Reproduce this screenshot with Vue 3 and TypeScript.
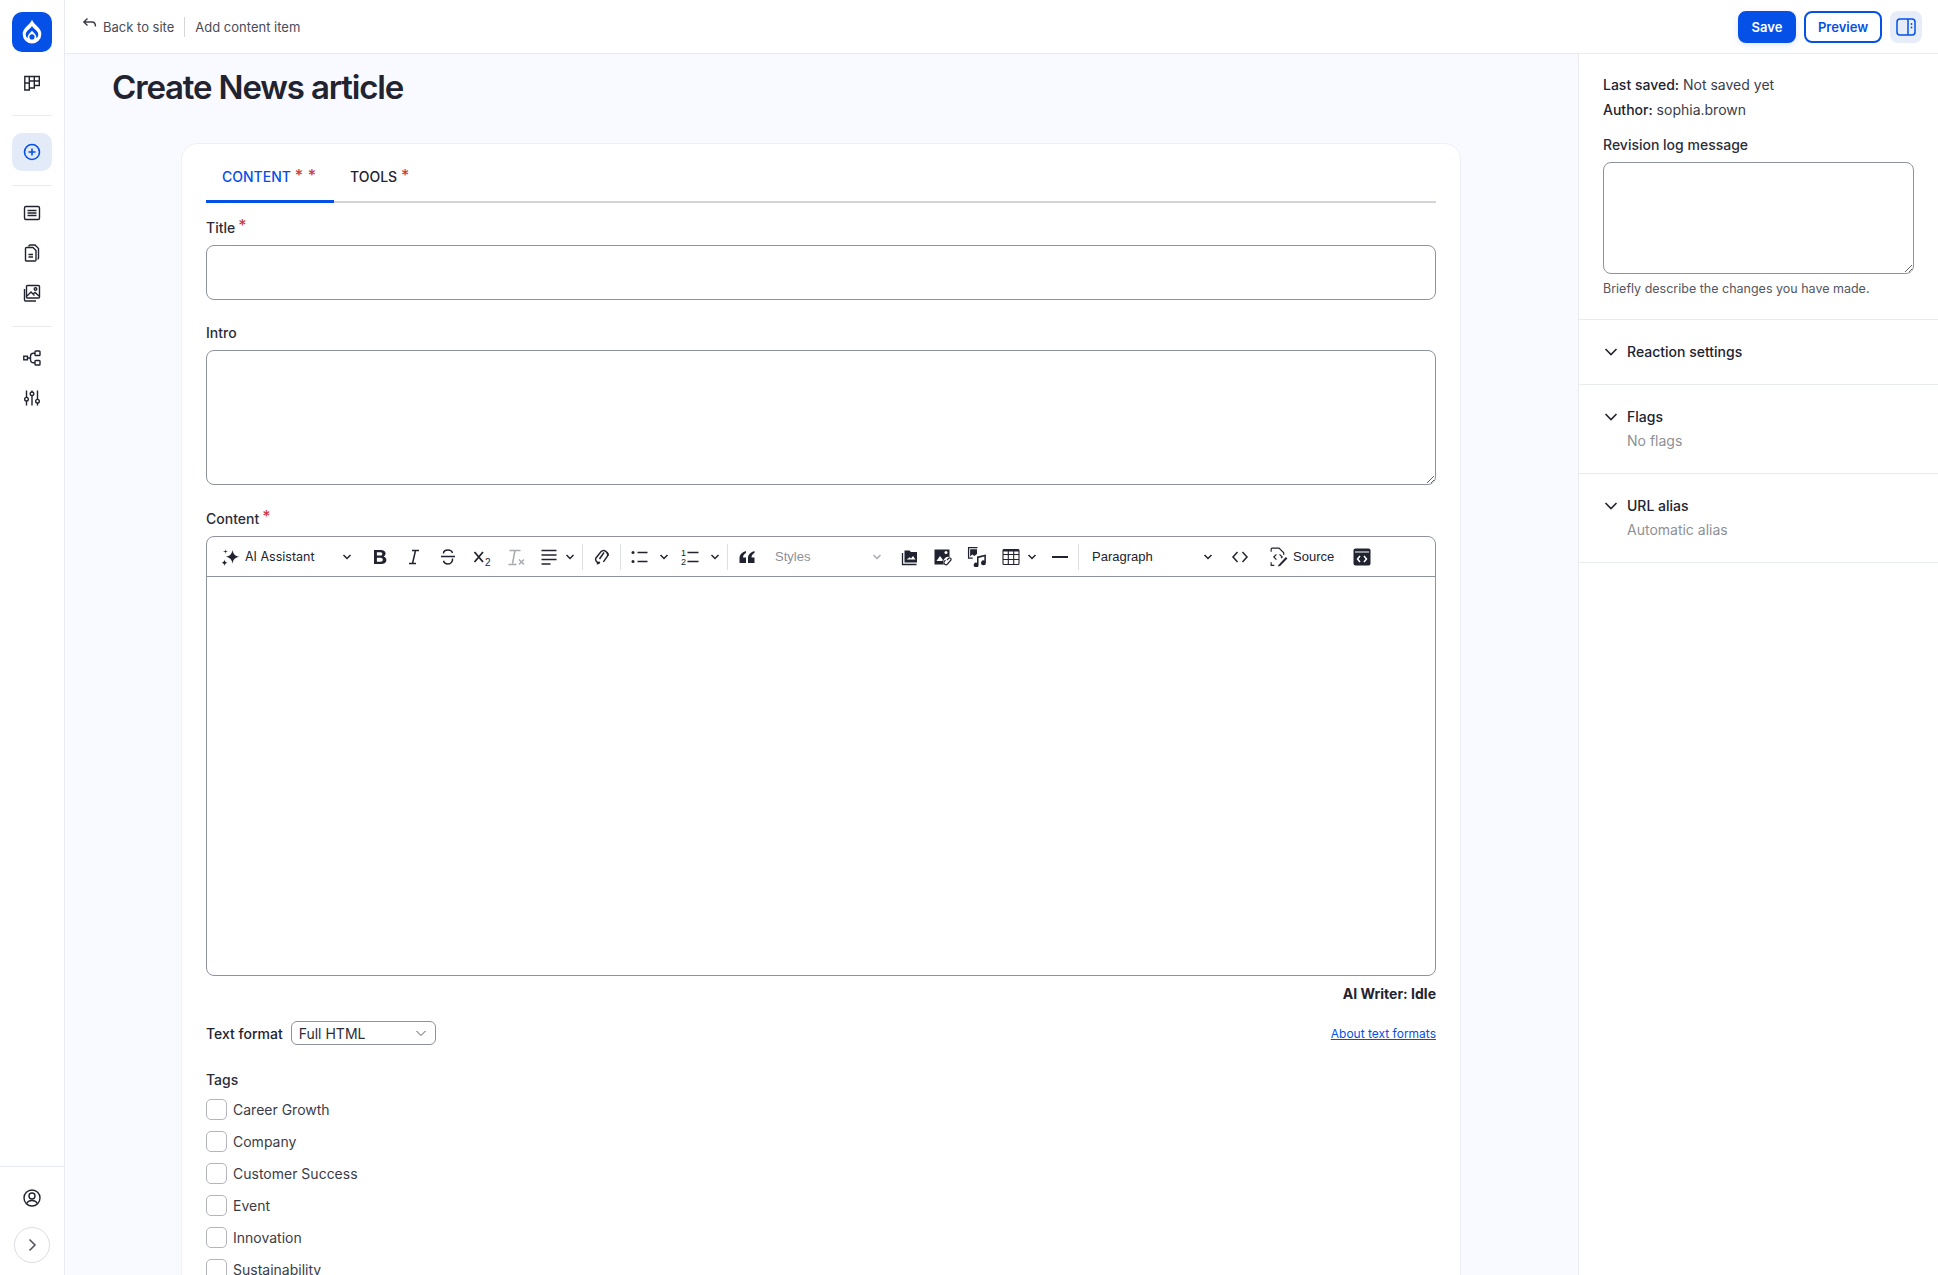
<script setup lang="ts">
const tags: string[] = ['Career Growth', 'Company', 'Customer Success', 'Event', 'Innovation', 'Sustainability']
</script>

<template>
  <div class="app">
    <aside class="nav">
      <div class="logo">
        <svg width="28" height="28" viewBox="0 0 24 24"><path fill="#fff" fill-rule="evenodd" d="M12 1.600c1 2.600 3 4 4.700 5.700 1.900 1.900 3.300 3.900 3.300 6.500a8 8 0 0 1-16 0c0-2.600 1.400-4.600 3.300-6.500C9 5.600 11 4.200 12 1.600zm0 5.200c-.8 1.400-2 2.300-3 3.300-1.200 1.200-2.400 2.400-2.400 4a3.600 3.600 0 0 0 1.700 3.100c-.2-1.700.6-3.100 1.700-4.200l2-2 2 2c1.100 1.100 1.900 2.500 1.700 4.200a3.600 3.600 0 0 0 1.700-3.100c0-1.600-1.200-2.800-2.400-4-1-1-2.200-1.900-3-3.300zM12 14a2.200 2.200 0 1 0 0 4.400 2.200 2.200 0 0 0 0-4.400z"/></svg>
      </div>
      <div class="nav-item first">
        <svg class="ni" viewBox="0 0 20 20"><path d="M2.800 3.500h4.500v13.500H2.800zM7.300 3.500h5v11.500h-5zM12.300 3.500h5v9h-5zM2.800 10H7.300M7.300 8h5M12.300 8h5"/></svg>
      </div>
      <hr class="nav-sep s1" />
      <div class="nav-item active">
        <svg class="ni blue" viewBox="0 0 20 20"><circle cx="10" cy="10" r="7.500"/><path d="M10 6.500v7M6.500 10h7"/></svg>
      </div>
      <hr class="nav-sep s2" />
      <div class="nav-item">
        <svg class="ni" viewBox="0 0 20 20"><rect x="2.500" y="3.500" width="15" height="13" rx="1.500"/><path d="M5.500 7.500h9M5.500 10h9M5.500 12.500h9"/></svg>
      </div>
      <div class="nav-item">
        <svg class="ni" viewBox="0 0 20 20"><path d="M7 3.500V3a1 1 0 0 1 1-1h5l3.500 3.500V15a1 1 0 0 1-1 1"/><path d="M4.500 4.500h6.500l3 3V17a1 1 0 0 1-1 1H4.500a1 1 0 0 1-1-1V5.500a1 1 0 0 1 1-1zM6.500 11.500h4.500M6.500 14h4.500"/></svg>
      </div>
      <div class="nav-item">
        <svg class="ni" viewBox="0 0 20 20"><rect x="4.500" y="2.500" width="13" height="12.500" rx="1"/><path d="M2.500 6v11a1 1 0 0 0 1 1H14M5 13l4-4 3.500 3.500M11 11l2-1.500 4 3.500"/><circle cx="13.500" cy="6" r="1.300"/></svg>
      </div>
      <hr class="nav-sep s3" />
      <div class="nav-item">
        <svg class="ni" viewBox="0 0 20 20"><rect x="1.800" y="8.200" width="3.600" height="3.600"/><rect x="13" y="3" width="5" height="4.500" rx=".8"/><rect x="13" y="12.500" width="5" height="4.500" rx=".8"/><path d="M5.400 10h3.100M13 5.200h-1.500a3 3 0 0 0-3 3v3.600a3 3 0 0 0 3 3H13"/></svg>
      </div>
      <div class="nav-item">
        <svg class="ni" viewBox="0 0 20 20"><path d="M4.500 2.500v7M4.500 13v4.500M10 2.500v1.500M10 7.600v9.900M15.500 2.500v9M15.500 15v2.500"/><circle cx="4.500" cy="11.200" r="1.800"/><circle cx="10" cy="5.800" r="1.800"/><circle cx="15.500" cy="13.200" r="1.800"/></svg>
      </div>
      <div class="nav-bottom">
        <div class="nav-user">
          <svg class="ni" viewBox="0 0 20 20"><circle cx="10" cy="10" r="8"/><circle cx="10" cy="8" r="3"/><path d="M4.700 15.700c.7-2 2.800-3.200 5.300-3.200s4.600 1.200 5.300 3.200"/></svg>
        </div>
        <div class="expand">
          <svg width="16" height="16" viewBox="0 0 16 16" fill="none" stroke="#55565f" stroke-width="1.600"><path d="M5.500 2.500 11 8l-5.500 5.500"/></svg>
        </div>
      </div>
    </aside>

    <div class="main">
      <header class="topbar">
        <a class="back">
          <svg width="16" height="16" viewBox="0 0 16 16" fill="none" stroke="#3b3c47" stroke-width="1.400"><path d="M5.500 1.500 1.800 5l3.700 3.500M2 5h8c2.500 0 3.500 1.600 3.500 4.500"/></svg>
          <span>Back to site</span>
        </a>
        <span class="crumb">Add content item</span>
        <div class="actions">
          <button class="btn primary">Save</button>
          <button class="btn outline">Preview</button>
          <button class="btn toggle">
            <svg width="20" height="20" viewBox="0 0 20 20" fill="none" stroke="#0550e6" stroke-width="1.500"><rect x="1" y="2" width="18" height="16" rx="3"/><path d="M12 2v16"/><circle cx="15.500" cy="7" r=".9" fill="#0550e6" stroke="none"/><circle cx="15.500" cy="10.500" r=".9" fill="#0550e6" stroke="none"/></svg>
          </button>
        </div>
      </header>

      <div class="workspace">
        <main class="content">
          <h1>Create News article</h1>
          <section class="card">
            <div class="tabs">
              <div class="tab on">CONTENT <i>*</i> <i class="second">*</i></div>
              <div class="tab">TOOLS <i>*</i></div>
            </div>

            <label class="lbl l-title">Title<i>*</i></label>
            <input class="box input-title" type="text" />

            <label class="lbl l-next">Intro</label>
            <textarea class="box input-intro"></textarea>

            <label class="lbl l-content">Content<i>*</i></label>
            <div class="editor">
              <div class="toolbar">
                <div class="tdrop ai">
                  <svg width="20" height="20" viewBox="0 0 20 20" fill="#222330"><path d="M12.500 3c.8 4.300 2.500 6 7 6.800-4.500.8-6.200 2.500-7 6.900-.8-4.400-2.500-6.100-7-6.900 4.500-.8 6.200-2.500 7-6.800zM4.500 12.500c.4 2.200 1.100 2.900 3.300 3.300-2.200.4-2.900 1.100-3.300 3.200-.4-2.100-1.100-2.800-3.200-3.200 2.100-.4 2.800-1.100 3.200-3.300zM5.500 2l.4 2.100L8 4.500l-2.100.4L5.500 7l-.4-2.100L3 4.500l2.100-.4z"/></svg>
                  <span class="drop-text">AI Assistant</span>
                  <svg class="chev" viewBox="0 0 10 10"><path d="m1.500 3 3.500 3.500L8.500 3"/></svg>
                </div>
                <div class="tb">
                  <svg class="ti" viewBox="0 0 20 20" fill="#222330"><path d="M4 3h6.800c3 0 4.800 1.300 4.800 3.600 0 1.400-.8 2.500-2.100 2.900 1.700.4 2.900 1.600 2.900 3.400 0 2.600-2 4.100-5.200 4.100H4zm2.900 2.300v3.300h3.300c1.300 0 2.100-.6 2.100-1.700s-.8-1.600-2.100-1.600zm0 5.500v3.900h3.600c1.500 0 2.300-.7 2.300-1.900 0-1.300-.8-2-2.300-2z"/></svg>
                </div>
                <div class="tb">
                  <svg class="ti line" viewBox="0 0 20 20"><path d="M8 3.500h7M5 16.500h7M11.500 3.500l-3 13"/></svg>
                </div>
                <div class="tb">
                  <svg class="ti line" viewBox="0 0 20 20"><path d="M3 9.500h14M14.500 6c-.5-2-2.300-3-4.500-3-2.500 0-4.500 1.300-4.500 3.400M14.500 11.500c.5 3-1.700 5.500-4.500 5.500-2.400 0-4-1.200-4.500-3.200"/></svg>
                </div>
                <div class="tb">
                  <svg class="ti" viewBox="0 0 20 20"><path fill="none" stroke="#222330" stroke-width="1.800" d="m2.500 5 8.500 10M11 5l-8.500 10"/><text x="13" y="18.500" class="sub">2</text></svg>
                </div>
                <div class="tb">
                  <svg class="ti line muted" viewBox="0 0 20 20"><path d="M3.500 3.500h11M9 3.500l-2.500 13M2.500 17.500h8M13 12.500l5 5M18 12.500l-5 5"/></svg>
                </div>
                <div class="tb split align">
                  <svg class="ti line" viewBox="0 0 20 20"><path d="M2.500 3.500h15M2.500 8h15M2.500 12.500h15M2.500 17h9"/></svg>
                  <svg class="chev" viewBox="0 0 10 10"><path d="m1.500 3 3.500 3.500L8.500 3"/></svg>
                </div>
                <span class="tsep"></span>
                <div class="tb link">
                  <svg class="ti line" viewBox="0 0 20 20"><path d="M7.800 15.300a3.100 3.100 0 0 1-4-4.100l5-6.300a4 4 0 0 1 6.300 4.800l-3.700 5.200M12 5.500 7.500 12"/><path d="M15.200 5.500a4 4 0 0 1 .9 3.300M7.800 15.300c-1 1.300-1.500 1.600-3 1.500"/></svg>
                </div>
                <span class="tsep"></span>
                <div class="tb bullets">
                  <svg class="ti line" viewBox="0 0 20 20"><circle cx="3" cy="5.500" r="1.500" fill="#222330" stroke="none"/><circle cx="3" cy="14.500" r="1.500" fill="#222330" stroke="none"/><path d="M7.500 5.500h10M7.500 14.500h10"/></svg>
                  <svg class="chev" viewBox="0 0 10 10"><path d="m1.500 3 3.500 3.500L8.500 3"/></svg>
                </div>
                <div class="tb numbers">
                  <svg class="ti line" viewBox="0 0 20 20"><path d="M7.500 5.500h11M7.500 14.500h11"/><text x="1" y="9" class="num">1</text><text x="1" y="18" class="num">2</text></svg>
                  <svg class="chev" viewBox="0 0 10 10"><path d="m1.500 3 3.500 3.500L8.500 3"/></svg>
                </div>
                <span class="tsep"></span>
                <div class="tb q">
                  <svg class="ti" viewBox="0 0 20 20" fill="#222330"><path d="M9 4C5.500 5 2.500 7.300 2.500 11v5H9v-5.500H6c0-2 1.300-3.800 3-4.500zM17.500 4c-3.500 1-6.500 3.300-6.500 7v5h6.500v-5.500h-3c0-2 1.300-3.800 3-4.500z"/></svg>
                </div>
                <div class="tdrop styles">
                  <span class="drop-text">Styles</span>
                  <svg class="chev" viewBox="0 0 10 10"><path d="m1.500 3 3.500 3.500L8.500 3"/></svg>
                </div>
                <div class="tb">
                  <svg class="ti" viewBox="0 0 20 20" fill="#222330"><path d="M4.500 3.500h5l1.500 1.500h6v10.500h-12.500zM6.500 12.500h9l-2.500-3.500-2 2.500-1.300-1.300z" fill-rule="evenodd"/><path d="M2.500 6v11.500h14" fill="none" stroke="#222330" stroke-width="1.300"/></svg>
                </div>
                <div class="tb imglink">
                  <svg class="ti" viewBox="0 0 20 20"><path fill="#222330" d="M2.500 2.500h15v7.500a5 5 0 0 0-5.500 7.500H2.500z"/><circle cx="14" cy="5.500" r="1.500" fill="#fff"/><path fill="#fff" d="m4.500 14 3.500-5 3 4-1 1z"/><path fill="none" stroke="#222330" stroke-width="1.200" d="m15 13 1.600-1.600a1.400 1.400 0 0 1 2 2L15.500 17a2 2 0 0 1-3-2.800l1-1"/></svg>
                </div>
                <div class="tb music">
                  <svg class="ti big" viewBox="0 0 20 20"><path fill="none" stroke="#222330" stroke-width="1.200" d="M10 1.500H1.500v10h4"/><path fill="#222330" d="M3 3h6.500v4.500L7 9.500 5 8 3 10zM9.500 10l8.500-2v8a2.300 2.300 0 1 1-1.500-2.100v-3.800l-5.500 1.300v6.600a2.300 2.300 0 1 1-1.500-2.100z"/></svg>
                </div>
                <div class="tb table">
                  <svg class="ti line thin" viewBox="0 0 20 20"><rect x="2" y="2.500" width="16" height="15" rx="1"/><path d="M2 7.500h16M2 12.500h16M7.300 2.500v15M12.700 2.500v15"/><path d="M2 3.500h16" stroke-width="2"/></svg>
                  <svg class="chev" viewBox="0 0 10 10"><path d="m1.500 3 3.500 3.500L8.500 3"/></svg>
                </div>
                <div class="tb">
                  <svg class="ti" viewBox="0 0 20 20"><path d="M2 9h16v2H2z" fill="#222330"/></svg>
                </div>
                <span class="tsep"></span>
                <div class="tdrop para">
                  <span class="drop-text">Paragraph</span>
                  <svg class="chev" viewBox="0 0 10 10"><path d="m1.500 3 3.500 3.500L8.500 3"/></svg>
                </div>
                <div class="tb">
                  <svg class="ti line" viewBox="0 0 20 20"><path d="M7.500 5 3 10l4.500 5M12.500 5l4.500 5-4.500 5"/></svg>
                </div>
                <div class="tb source">
                  <svg class="ti line thin big" viewBox="0 0 20 20"><path d="M6 18.500H3v-3M3 5.500V3a1 1 0 0 1 1-1h6.500L15 6.500v2"/><path d="M8 8 5.500 10.500 8 13M11 8l2.500 2.500-1 1"/><path d="m10 18 7-7.500 1.500 1.500-7 7-2 .5z" fill="#222330" stroke="none"/></svg>
                  <span class="drop-text">Source</span>
                </div>
                <div class="tb">
                  <svg class="ti" viewBox="0 0 20 20"><rect x="1.500" y="1.500" width="17" height="17" rx="2" fill="#222330"/><path d="M3 5h14" stroke="#fff" stroke-width="1.200"/><path d="M8 9 5.500 12 8 15M12 9l2.500 3-2.500 3" fill="none" stroke="#fff" stroke-width="1.500"/></svg>
                </div>
              </div>
              <div class="editable"></div>
            </div>
            <div class="writer">AI Writer: Idle</div>

            <div class="format">
              <label class="format-label">Text format</label>
              <div class="select-wrap">
                <select class="select"><option>Full HTML</option></select>
                <svg class="select-chev" viewBox="0 0 12 12"><path d="m1.500 4 4.500 4.500L10.500 4"/></svg>
              </div>
              <a class="about">About text formats</a>
            </div>

            <div class="lbl l-tags">Tags</div>
            <div class="checks">
              <label v-for="t in tags" :key="t" class="check"><input type="checkbox" /><span>{{ t }}</span></label>
            </div>
          </section>
        </main>

        <aside class="side">
          <div class="meta">
            <p><b>Last saved:</b> Not saved yet</p>
            <p><b>Author:</b> sophia.brown</p>
            <label class="lbl rev-label">Revision log message</label>
            <textarea class="box rev"></textarea>
            <div class="help">Briefly describe the changes you have made.</div>
          </div>
          <div class="acc solo">
            <svg class="acc-chev" viewBox="0 0 14 14"><path d="m1.500 4 5.500 5.500L12.500 4"/></svg>
            <div class="acc-title">Reaction settings</div>
          </div>
          <div class="acc">
            <svg class="acc-chev" viewBox="0 0 14 14"><path d="m1.500 4 5.500 5.500L12.500 4"/></svg>
            <div><div class="acc-title">Flags</div><div class="acc-sub">No flags</div></div>
          </div>
          <div class="acc">
            <svg class="acc-chev" viewBox="0 0 14 14"><path d="m1.500 4 5.500 5.500L12.500 4"/></svg>
            <div><div class="acc-title">URL alias</div><div class="acc-sub">Automatic alias</div></div>
          </div>
        </aside>
      </div>
    </div>
  </div>
</template>

<style>
html, body { margin: 0; height: 100%; overflow: hidden; background: #fff; }
</style>

<style scoped>
* { box-sizing: border-box; }
.app { display: flex; height: 100vh; overflow: hidden; font-family: Inter, "Noto Sans", sans-serif; font-size: 14px; color: #222330; background: #f8faff; }
.nav { width: 65px; flex: none; background: #fff; border-right: 1px solid #e9ebf0; display: flex; flex-direction: column; align-items: center; padding-top: 12px; }
.logo { width: 40px; height: 40px; border-radius: 10px; background: #0550e6; display: flex; align-items: center; justify-content: center; }
.nav-item { width: 40px; height: 38px; display: flex; align-items: center; justify-content: center; border-radius: 10px; margin-top: 2px; }
.nav-item.first { margin-top: 12px; }
.nav-item.active { background: #e3ebf9; margin: 0; }
.ni { width: 20px; height: 20px; fill: none; stroke: #222330; stroke-width: 1.400; }
.ni.blue { stroke: #0550e6; stroke-width: 1.600; }
.nav-sep { width: 40px; border: 0; border-top: 1px solid #e9ebf0; margin: 0; flex: none; }
.s1 { margin: 13px 0 17px; }
.s2 { margin: 14px 0 6px; }
.s3 { margin: 14px 0 10px; }
.nav-bottom { margin-top: auto; width: 100%; border-top: 1px solid #e9ebf0; display: flex; flex-direction: column; align-items: center; padding: 20px 0 12px; }
.nav-user { height: 22px; display: flex; align-items: center; }
.expand { width: 36px; height: 36px; margin-top: 18px; border: 1px solid #dcdde2; border-radius: 50%; display: flex; align-items: center; justify-content: center; background: #fff; }

.main { flex: 1; min-width: 0; display: flex; flex-direction: column; }
.topbar { height: 54px; flex: none; background: #fff; border-bottom: 1px solid #e9ebf0; display: flex; align-items: center; padding: 0 16px 0 16px; font-size: 13px; color: #4b4c57; }
.back { display: flex; align-items: center; gap: 5px; height: 20px; padding: 0 10px 0 1px; border-right: 1px solid #d5d6dc; }
.back svg { margin-top: -3px; }
.crumb { margin-left: 10px; }
.actions { margin-left: auto; display: flex; gap: 8px; }
.btn { height: 32px; border-radius: 8px; font: 600 13px Inter, sans-serif; border: 2px solid #0550e6; padding: 0; display: flex; align-items: center; justify-content: center; }
.primary { width: 58px; background: #0550e6; color: #fff; box-shadow: 0 2px 6px rgba(5, 80, 230, .15); }
.outline { width: 78px; background: #fff; color: #0550e6; }
.toggle { width: 32px; background: #e6ecf8; border: 0; }

.workspace { flex: 1; min-height: 0; display: flex; }
.content { flex: 1; min-width: 0; overflow: hidden; }
h1 { margin: 14px 0 0 47px; height: 38px; font-size: 33px; line-height: 38px; font-weight: 600; letter-spacing: -0.035em; color: #222330; }
.card { width: 1280px; margin: 37px 0 0 116px; padding: 0 24px 24px; background: #fff; border: 1px solid #eef0f5; border-radius: 16px; }
.tabs { height: 59px; display: flex; border-bottom: 2px solid #d3d4d9; }
.tab { height: 59px; padding: 23px 16px 0; font-size: 14px; font-weight: 500; line-height: 20px; }
.tab.on { width: 128px; color: #0550e6; border-bottom: 3px solid #0550e6; white-space: nowrap; }
.tab i, .lbl i { font-style: normal; color: #cf3a40; font-size: 16px; line-height: 0; position: relative; top: -1px; }
.lbl i { top: -2px; }
.tab .second { margin-left: 1px; }
.lbl { display: block; font-size: 14px; line-height: 20px; font-weight: 500; color: #2c2d38; }
.lbl i { margin-left: 3px; }
.l-title { margin-top: 15px; }
.l-next { margin-top: 23px; }
.l-content { margin-top: 24px; }
.box { display: block; width: 100%; margin-top: 7px; border: 1px solid #8e929c; border-radius: 8px; background: #fff; outline: none; font: 14px Inter, sans-serif; }
.input-title { height: 55px; }
.input-intro { height: 135px; resize: vertical; }
.editor { margin-top: 7px; height: 440px; border: 1px solid #8e929c; border-radius: 8px; overflow: hidden; background: #fff; }
.toolbar { height: 40px; display: flex; align-items: center; border-bottom: 1px solid #8e929c; padding-left: 5px; font-family: "Liberation Sans", Arial, sans-serif; font-size: 13px; }
.tb { width: 34px; height: 34px; flex: none; display: flex; align-items: center; justify-content: center; }
.tb.align { width: 48px; padding-left: 6px; gap: 6px; justify-content: flex-start; }
.tb.link { margin-left: 1px; }
.tb.bullets { width: 53px; padding-left: 8px; gap: 9px; justify-content: flex-start; }
.tb.numbers { width: 51px; padding-left: 5px; gap: 10px; justify-content: flex-start; }
.tb.q { margin-left: 1px; }
.tb.imglink { margin-left: -2px; }
.tb.music { margin-left: 1px; }
.tb.table { width: 49px; padding-left: 7px; gap: 6px; justify-content: flex-start; }
.tb.source { width: 88px; gap: 4px; justify-content: flex-start; padding-left: 11px; }
.ti { width: 20px; height: 20px; flex: none; }
.ti.big { width: 21px; height: 21px; }
.ti.line { fill: none; stroke: #222330; stroke-width: 1.500; }
.ti.thin { stroke-width: 1.100; }
.ti.muted { stroke: #a9aab0; }
.sub { font: 10px "Liberation Sans", sans-serif; fill: #222330; stroke: none; }
.num { font: 9px "Liberation Sans", sans-serif; fill: #222330; stroke: none; }
.chev { width: 10px; height: 10px; flex: none; fill: none; stroke: #222330; stroke-width: 1.500; }
.tsep { width: 1px; height: 26px; flex: none; background: #dedfe4; margin: 0 1px; }
.tdrop { height: 34px; flex: none; display: flex; align-items: center; }
.ai { width: 151px; padding-left: 8px; gap: 5px; font-family: Inter, sans-serif; font-size: 12.500px; }
.ai .chev { margin-left: auto; margin-right: 11px; }
.styles { width: 129px; padding-left: 11px; color: #8e9097; justify-content: space-between; padding-right: 11px; }
.styles .chev { stroke: #a9aab0; }
.para { width: 143px; padding-left: 12px; justify-content: space-between; padding-right: 10px; }

.editable { height: 398px; }
.writer { margin-top: 8px; height: 20px; line-height: 20px; text-align: right; font-weight: 700; font-size: 14px; }
.format { margin-top: 17px; height: 24px; display: flex; align-items: center; }
.format-label { font-weight: 500; margin-right: 8px; }
.select-wrap { position: relative; width: 145px; height: 24px; }
.select { width: 100%; height: 24px; appearance: none; border: 1px solid #8e929c; border-radius: 6px; background: #fff; font: 14px Inter, sans-serif; color: #2c2d38; padding: 0 7px; outline: none; }
.select-chev { position: absolute; right: 9px; top: 6px; width: 12px; height: 12px; fill: none; stroke: #55565f; stroke-width: 1; pointer-events: none; }
.about { margin-left: auto; font-size: 12px; color: #0550e6; text-decoration: underline; }
.l-tags { margin-top: 25px; }
.checks { margin-top: 8px; display: flex; flex-direction: column; gap: 10px; }
.check { display: flex; align-items: center; height: 22px; gap: 6px; color: #3b3c47; }
.check input { appearance: none; width: 21px; height: 21px; margin: 0; border: 1px solid #b3b5bc; border-radius: 5px; background: #fff; }

.side { width: 360px; flex: none; background: #fff; border-left: 1px solid #e9ebf0; }
.meta { padding: 18px 24px 20px 24px; border-bottom: 1px solid #e9ebf0; height: 266px; color: #3b3c47; }
.meta p { margin: 0; line-height: 25px; }
.meta b { font-weight: 500; color: #222330; }
.rev-label { margin-top: 13px; }
.rev { height: 112px; width: 311px; resize: vertical; }
.help { margin-top: 6px; font-size: 12.500px; line-height: 18px; color: #55565f; }
.acc { display: flex; align-items: flex-start; gap: 9px; padding: 22px 24px 0 25px; height: 89px; border-bottom: 1px solid #e9ebf0; line-height: 20px; }
.acc.solo { height: 65px; }
.acc-chev { width: 14px; height: 14px; margin-top: 3px; flex: none; fill: none; stroke: #222330; stroke-width: 1.600; }
.acc-title { font-weight: 500; color: #222330; }
.acc-sub { margin-top: 4px; color: #8e9097; }
</style>
